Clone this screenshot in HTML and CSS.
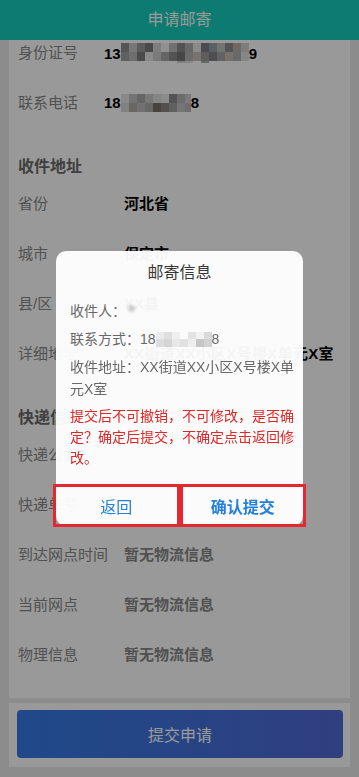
FILE: index.html
```html
<!DOCTYPE html>
<html lang="zh-CN">
<head>
<meta charset="utf-8">
<meta name="viewport" content="width=device-width, initial-scale=1">
<title>申请邮寄</title>
<link rel="stylesheet" href="styles.css">
</head>
<body>
<header class="topbar">申请邮寄</header>
<main class="page">
  <section class="card">
    <div class="group group-basic">
      <div class="row"><span class="label">身份证号</span><span class="value">13<svg class="mosaic m1" width="128" height="20" viewBox="0 0 128 20"><g>
        <rect x="0" y="0" width="8" height="9" fill="#8f8f8f"/><rect x="8" y="0" width="8" height="9" fill="#c9c9c9"/><rect x="16" y="0" width="8" height="9" fill="#9a9a9a"/><rect x="24" y="0" width="8" height="9" fill="#7a7a7a"/><rect x="32" y="0" width="8" height="9" fill="#d2d2d2"/><rect x="40" y="0" width="8" height="9" fill="#f0f0f2"/><rect x="48" y="0" width="8" height="9" fill="#bcbcbc"/><rect x="56" y="0" width="8" height="9" fill="#8a8a90"/><rect x="64" y="0" width="8" height="9" fill="#b0b0b0"/><rect x="72" y="0" width="8" height="9" fill="#e4e4e4"/><rect x="80" y="0" width="8" height="9" fill="#7c7c84"/><rect x="88" y="0" width="8" height="9" fill="#9aa0a8"/><rect x="96" y="0" width="8" height="9" fill="#c0c0c0"/><rect x="104" y="0" width="8" height="9" fill="#8c8c8c"/><rect x="112" y="0" width="8" height="9" fill="#b8b0a8"/><rect x="120" y="0" width="8" height="9" fill="#d0d0d0"/>
        <rect x="0" y="9" width="8" height="9" fill="#a0a0a0"/><rect x="8" y="9" width="8" height="9" fill="#b8b8b8"/><rect x="16" y="9" width="8" height="9" fill="#7e7e7e"/><rect x="24" y="9" width="8" height="9" fill="#e8e8e8"/><rect x="32" y="9" width="8" height="9" fill="#cccccc"/><rect x="40" y="9" width="8" height="9" fill="#a8a8a8"/><rect x="48" y="9" width="8" height="9" fill="#8a8a8a"/><rect x="56" y="9" width="8" height="9" fill="#767676"/><rect x="64" y="9" width="8" height="9" fill="#b4b4b4"/><rect x="72" y="9" width="8" height="9" fill="#c8c0c0"/><rect x="80" y="9" width="8" height="9" fill="#9c9c9c"/><rect x="88" y="9" width="8" height="9" fill="#808088"/><rect x="96" y="9" width="8" height="9" fill="#a4a4ac"/><rect x="104" y="9" width="8" height="9" fill="#c4bcb4"/><rect x="112" y="9" width="8" height="9" fill="#b0b0b0"/><rect x="120" y="9" width="8" height="9" fill="#e0e0e0"/>
        <rect x="56" y="18" width="8" height="2" fill="#d8d0cc"/><rect x="64" y="18" width="8" height="2" fill="#e0e0e4"/><rect x="80" y="18" width="8" height="2" fill="#b0b0b0"/></g></svg>9</span></div>
      <div class="row"><span class="label">联系电话</span><span class="value">18<svg class="mosaic m2" width="70" height="18" viewBox="0 0 70 18">
        <rect x="0" y="0" width="8" height="9" fill="#e4e4e4"/><rect x="8" y="0" width="8" height="9" fill="#c2c2c2"/><rect x="16" y="0" width="8" height="9" fill="#a8a8a8"/><rect x="24" y="0" width="8" height="9" fill="#c8c8c8"/><rect x="32" y="0" width="8" height="9" fill="#dcdcdc"/><rect x="40" y="0" width="8" height="9" fill="#e8e8e8"/><rect x="48" y="0" width="8" height="9" fill="#8c8c8c"/><rect x="56" y="0" width="8" height="9" fill="#b4b4b4"/><rect x="64" y="0" width="6" height="9" fill="#cccccc"/>
        <rect x="0" y="9" width="8" height="9" fill="#d8d8d8"/><rect x="8" y="9" width="8" height="9" fill="#b0aca8"/><rect x="16" y="9" width="8" height="9" fill="#bcbcbc"/><rect x="24" y="9" width="8" height="9" fill="#acaca8"/><rect x="32" y="9" width="8" height="9" fill="#787068"/><rect x="40" y="9" width="8" height="9" fill="#8a8480"/><rect x="48" y="9" width="8" height="9" fill="#a0a0a4"/><rect x="56" y="9" width="8" height="9" fill="#c4c4c4"/><rect x="64" y="9" width="6" height="9" fill="#b8b8b8"/></svg>8</span></div>
    </div>
    <div class="group">
      <h2 class="group-title">收件地址</h2>
      <div class="row"><span class="label">省份</span><span class="value">河北省</span></div>
      <div class="row"><span class="label">城市</span><span class="value">保定市</span></div>
      <div class="row"><span class="label">县/区</span><span class="value">XX县</span></div>
      <div class="row"><span class="label">详细地址</span><span class="value wide">XX街道XX小区X号楼X单元X室</span></div>
    </div>
    <div class="group">
      <h2 class="group-title">快递信息</h2>
      <div class="row"><span class="label">快递公司</span><span class="value"></span></div>
      <div class="row"><span class="label">快递单号</span><span class="value"></span></div>
      <div class="row"><span class="label">到达网点时间</span><span class="value muted">暂无物流信息</span></div>
      <div class="row"><span class="label">当前网点</span><span class="value muted">暂无物流信息</span></div>
      <div class="row"><span class="label">物理信息</span><span class="value muted">暂无物流信息</span></div>
    </div>
  </section>
  <footer class="action-bar"><button class="submit" type="button">提交申请</button></footer>
</main>
<div class="mask"></div>
<div class="dialog-layer">
  <div class="dialog">
    <h3 class="dialog-title">邮寄信息</h3>
    <div class="dialog-body">
      <p class="info">收件人：<span class="blur-name"></span></p>
      <p class="info">联系方式：18<svg class="mosaic m3" width="56" height="15" viewBox="0 0 56 15">
        <rect x="0" y="0" width="8" height="7" fill="#eeeeee"/><rect x="8" y="0" width="8" height="7" fill="#e2e2e2"/><rect x="16" y="0" width="8" height="7" fill="#f4f4f4"/><rect x="24" y="0" width="8" height="7" fill="#ffffff"/><rect x="32" y="0" width="8" height="7" fill="#e6e6e6"/><rect x="40" y="0" width="8" height="7" fill="#f6f6f6"/><rect x="48" y="0" width="8" height="7" fill="#dcdcdc"/>
        <rect x="0" y="7" width="8" height="8" fill="#e0e0e0"/><rect x="8" y="7" width="8" height="8" fill="#d8d8d8"/><rect x="16" y="7" width="8" height="8" fill="#ececec"/><rect x="24" y="7" width="8" height="8" fill="#e4e4e4"/><rect x="32" y="7" width="8" height="8" fill="#f2f2f2"/><rect x="40" y="7" width="8" height="8" fill="#c8c8c8"/><rect x="48" y="7" width="8" height="8" fill="#d4d4d4"/></svg>8</p>
      <p class="info">收件地址：XX街道XX小区X号楼X单元X室</p>
      <p class="warn">提交后不可撤销，不可修改，是否确定？确定后提交，不确定点击返回修改。</p>
    </div>
    <div class="dialog-actions">
      <button class="btn btn-back" type="button">返回</button>
      <button class="btn btn-ok" type="button">确认提交</button>
    </div>
  </div>
</div>
</body>
</html>
```

FILE: styles.css
```css
* { box-sizing: border-box; }
html, body { margin: 0; }
body {
  background: #eaeaea;
  font-family: "Liberation Sans", "Noto Sans CJK SC", sans-serif;
  padding: 28px 9px 10px;
}
.topbar {
  position: fixed;
  top: 0;
  left: 0;
  right: 0;
  height: 40px;
  background: #17cdbc;
  color: #fff;
  font-size: 16px;
  line-height: 40px;
  text-align: center;
  z-index: 5;
}
.card {
  background: #fff;
  padding: 0 9px 18px;
}
.row {
  display: grid;
  grid-template-columns: 106px 1fr;
  height: 50px;
  align-items: center;
  font-size: 15px;
  line-height: 20px;
}
.group-basic .row { grid-template-columns: 86px 1fr; }
.label { color: #888; white-space: nowrap; }
.value {
  color: #000;
  font-weight: bold;
  white-space: nowrap;
}
.value.wide { letter-spacing: 0.3px; }
.value.muted { color: #888; }
.mosaic { vertical-align: -4px; }
.group-title {
  margin: 0;
  padding: 28px 0 1px;
  font-size: 16px;
  line-height: 22px;
  color: #6a6a6a;
  font-weight: bold;
}
.action-bar {
  margin-top: 5px;
  background: #fff;
  padding: 7px 7px 9px 8px;
}
.submit {
  display: block;
  width: 100%;
  height: 48px;
  border: 0;
  border-radius: 4px;
  background: linear-gradient(90deg, #347be6, #5069d5);
  color: #fff;
  font: 16px "Liberation Sans", "Noto Sans CJK SC", sans-serif;
}
.mask {
  position: fixed;
  inset: 0;
  background: rgba(0, 0, 0, 0.4);
  z-index: 10;
}
.dialog-layer {
  position: fixed;
  inset: 0;
  display: flex;
  align-items: center;
  justify-content: center;
  z-index: 20;
}
.dialog {
  width: 247px;
  background: #fff;
  border-radius: 10px;
  padding-top: 11px;
  opacity: 0.96;
}
.dialog-title {
  margin: 0;
  font-size: 16px;
  line-height: 22px;
  font-weight: normal;
  color: #333;
  text-align: center;
}
.dialog-body {
  margin-top: 16px;
  padding: 0 6px 0 14px;
}
.info {
  margin: 0 0 6px;
  font-size: 14px;
  line-height: 22px;
  color: #666;
}
.blur-name {
  display: inline-block;
  width: 7px;
  height: 7px;
  margin-left: 2px;
  border-radius: 50%;
  background: #cfcfcf;
  filter: blur(1.5px);
  vertical-align: 4px;
}
.m3 { vertical-align: -3px; }
.warn {
  margin: 0;
  font-size: 14px;
  line-height: 21px;
  color: #e02424;
}
.dialog-actions {
  display: grid;
  grid-template-columns: 1fr 1fr;
  margin: 15px -3px -1px;
}
.btn {
  height: 43px;
  border: 3px solid #e8222b;
  background: transparent;
  font: 16px "Liberation Sans", "Noto Sans CJK SC", sans-serif;
  color: #1f7fe0;
  padding: 0;
}
.btn-ok { font-weight: bold; }
```
